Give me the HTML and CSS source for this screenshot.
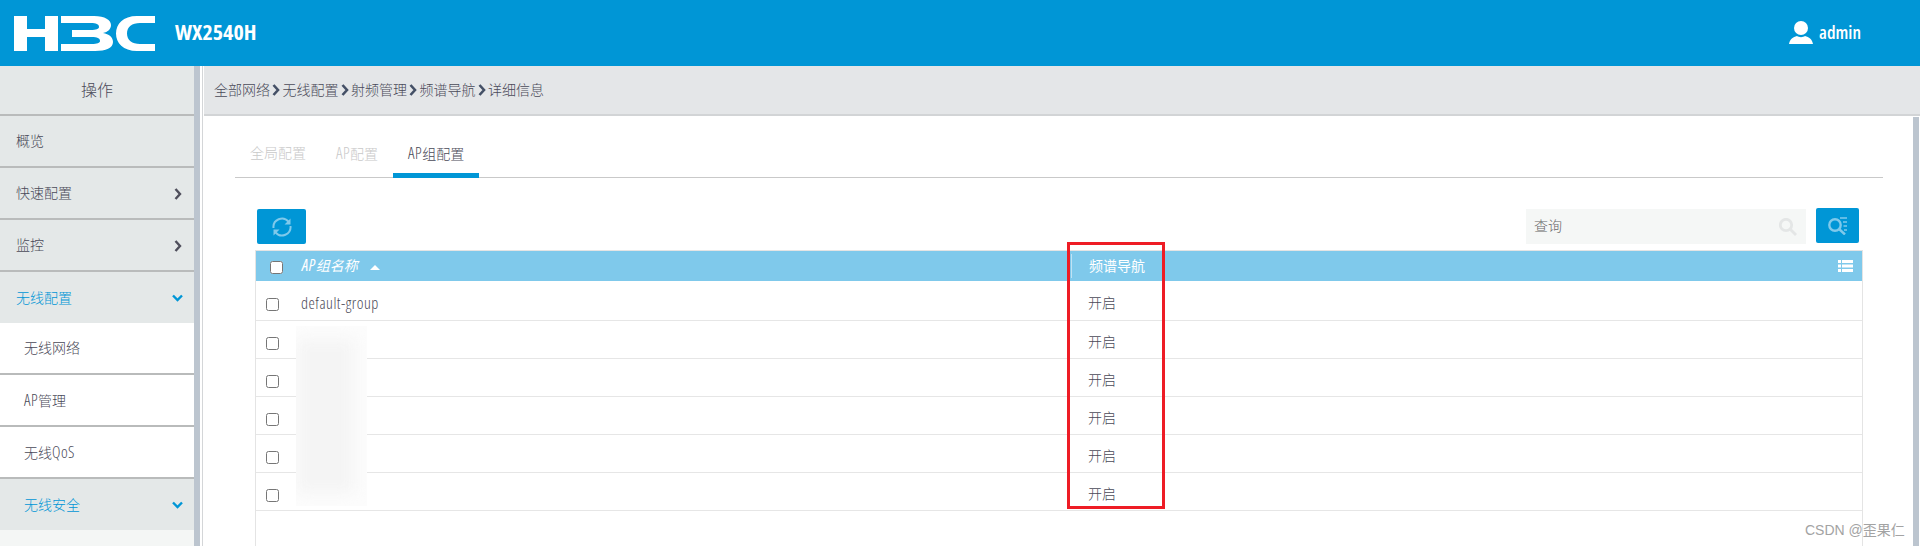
FILE: index.html
```html
<!DOCTYPE html>
<html lang="zh-CN">
<head>
<meta charset="utf-8">
<title>WX2540H</title>
<link rel="stylesheet" href="styles.css">
</head>
<body>
<div class="app">
  <header class="topbar">
    <svg class="logo" viewBox="0 0 142 35" aria-label="H3C"><path d="M0 0h13v13h18V0h13v35H31V21H13v14H0z"/><path d="M47 0h33c11 0 17 4 17 9 0 4-3 7-8 8 6 1 10 4 10 9 0 6-7 9-18 9H47v-7h31c5 0 8-1 8-3 0-3-3-4-8-4H58v-7h19c5 0 8-1 8-3 0-3-3-4-8-4H47z"/><path d="M141 0h-18c-14 0-21 8-21 17.500S109 35 123 35h18v-7h-15c-8 0-13-4-13-10.500S118 7 126 7h15z"/></svg>
    <div class="brand">WX2540H</div>
    <div class="user">
      <svg class="user-icon" viewBox="0 0 24 23"><circle cx="12" cy="7" r="7"/><path d="M0 23c1-5 4-7 8-8 2 1.500 6 1.500 8 0 4 1 7 3 8 8z"/></svg>
      <span>admin</span>
    </div>
  </header>
  <div class="body">
    <nav class="sidebar">
      <div class="side-title">操作</div>
      <div class="side-row">概览</div>
      <div class="side-row">快速配置<svg class="chev" viewBox="0 0 8 12"><path d="M1.500 1l4.500 5-4.500 5"/></svg></div>
      <div class="side-row">监控<svg class="chev" viewBox="0 0 8 12"><path d="M1.500 1l4.500 5-4.500 5"/></svg></div>
      <div class="side-row open">无线配置<svg class="chev-down" viewBox="0 0 11 8"><path d="M1 1.500l4.500 4.500 4.500-4.500"/></svg></div>
      <div class="side-sub">无线网络</div>
      <div class="side-sub"><span><span class="en">AP</span>管理</span></div>
      <div class="side-sub"><span>无线<span class="en">QoS</span></span></div>
      <div class="side-row open nested">无线安全<svg class="chev-down" viewBox="0 0 11 8"><path d="M1 1.500l4.500 4.500 4.500-4.500"/></svg></div>
    </nav>
    <div class="gutter"></div>
    <main class="main">
      <div class="crumbs">
        <span>全部网络</span><svg class="crumb-sep" viewBox="0 0 8 12"><path d="M1.500 1l4.500 5-4.500 5"/></svg>
        <span>无线配置</span><svg class="crumb-sep" viewBox="0 0 8 12"><path d="M1.500 1l4.500 5-4.500 5"/></svg>
        <span>射频管理</span><svg class="crumb-sep" viewBox="0 0 8 12"><path d="M1.500 1l4.500 5-4.500 5"/></svg>
        <span>频谱导航</span><svg class="crumb-sep" viewBox="0 0 8 12"><path d="M1.500 1l4.500 5-4.500 5"/></svg>
        <span>详细信息</span>
      </div>
      <section class="content">
        <div class="scrollbar"></div>
        <div class="tabs">
          <div class="tab">全局配置</div>
          <div class="tab"><span class="en">AP</span>配置</div>
          <div class="tab active"><span class="en">AP</span>组配置</div>
        </div>
        <div class="toolbar">
          <button class="icon-btn refresh" type="button" aria-label="刷新">
            <svg viewBox="0 0 22 22"><path d="M2.500 12a8.500 8.500 0 0 1 15-6.300M19.500 10a8.500 8.500 0 0 1-15 6.300"/><path class="solid" d="M19.500 2.500v6h-6zM2.500 19.500v-6h6z"/></svg>
          </button>
          <div class="search">
            <span>查询</span>
            <svg viewBox="0 0 18 18"><circle cx="7" cy="7" r="5.700"/><path d="M11 11l6 6"/></svg>
          </div>
          <button class="icon-btn adv" type="button" aria-label="高级查询">
            <svg viewBox="0 0 19 18"><circle cx="7" cy="8" r="5.700"/><path d="M11 12l6 5.500"/><path class="bars" d="M12 1h7M15 5h4M15.500 9h3.500M16 13h3"/></svg>
          </button>
        </div>
        <div class="table-wrap">
          <table class="grid">
            <colgroup><col class="c-check"><col class="c-name"><col></colgroup>
            <thead>
              <tr>
                <th class="head-check"><input type="checkbox"></th>
                <th class="head-name"><span class="en">AP</span>组名称<i class="sort"></i></th>
                <th class="head-nav">频谱导航
                  <svg class="cols" viewBox="0 0 15 12"><path d="M0 0h3v3H0zM0 4.500h3v3H0zM0 9h3v3H0zM4 0h11v3H4zM4 4.500h11v3H4zM4 9h11v3H4z"/></svg>
                </th>
              </tr>
            </thead>
            <tbody>
              <tr><td class="cell-check"><input type="checkbox"></td><td><span class="en">default-group</span></td><td class="cell-nav">开启</td></tr>
              <tr><td class="cell-check"><input type="checkbox"></td><td></td><td class="cell-nav">开启</td></tr>
              <tr><td class="cell-check"><input type="checkbox"></td><td></td><td class="cell-nav">开启</td></tr>
              <tr><td class="cell-check"><input type="checkbox"></td><td></td><td class="cell-nav">开启</td></tr>
              <tr><td class="cell-check"><input type="checkbox"></td><td></td><td class="cell-nav">开启</td></tr>
              <tr><td class="cell-check"><input type="checkbox"></td><td></td><td class="cell-nav">开启</td></tr>
            </tbody>
          </table>
          <div class="redact"></div>
          <div class="highlight"></div>
        </div>
      </section>
    </main>
  </div>
  <div class="watermark">CSDN @歪果仁</div>
</div>
</body>
</html>
```

FILE: styles.css
```css
* { box-sizing: border-box; }
html, body { margin: 0; height: 546px; overflow: hidden; background: #fff; }
body { font: 300 14px/1.2 "Open Sans", "Noto Sans CJK SC", sans-serif; font-stretch: 75%; color: #4a4a58; }
.en { font-size: 16px; line-height: 1; letter-spacing: .5px; }
.app { position: relative; height: 546px; display: flex; flex-direction: column; overflow: hidden; }

.topbar { flex: 0 0 66px; background: #0096d6; display: flex; align-items: center; color: #fff; }
.logo { width: 142px; height: 35px; margin-left: 14px; fill: #fff; }
.brand { margin-left: 19px; margin-bottom: 3px; font-size: 22px; font-weight: 700; }
.user { margin-left: auto; margin-right: 59px; display: flex; align-items: center; gap: 6px; font-size: 18px; font-weight: 600; }
.user-icon { width: 24px; height: 23px; fill: #fff; margin-bottom: 2px; }

.body { flex: 1; display: flex; min-height: 0; }
.sidebar { flex: 0 0 194px; background: #f4f6f5; }
.side-title { height: 50px; display: flex; align-items: center; justify-content: center; padding-top: 1px; font-size: 16px; background: #e4e8e8; border-bottom: 2px solid #b9bbbb; }
.side-row { height: 52px; display: flex; align-items: center; justify-content: space-between; padding: 1px 12px 0 16px; background: #e4e8e8; border-bottom: 2px solid #b9bbbb; }
.side-row.open { height: 51px; color: #0096d6; border-bottom: 0; }
.side-row.nested { padding-left: 24px; }
.side-sub { height: 52px; display: flex; align-items: center; padding: 1px 0 0 24px; background: #fff; border-bottom: 2px solid #b9bbbb; }
.chev { width: 8px; height: 12px; fill: none; stroke: #4f4f5c; stroke-width: 2.400; }
.chev-down { width: 11px; height: 8px; margin-right: -1px; fill: none; stroke: #0096d6; stroke-width: 2.400; }

.gutter { flex: 0 0 9px; background: #fff; border-left: 6px solid #bcc5cf; border-right: 1px solid #d4d6d8; }
.main { flex: 1; min-width: 0; display: flex; flex-direction: column; }
.crumbs { flex: 0 0 50px; margin-left: 1px; display: flex; align-items: center; padding-left: 10px; background: #e4e6e8; border-bottom: 2px solid #d2d4d6; }
.crumb-sep { width: 8px; height: 12px; margin: 0 2.500px 0 2px; fill: none; stroke: #445066; stroke-width: 2.600; }

.content { position: relative; flex: 1; padding: 0 37px 0 32px; min-height: 0; }
.scrollbar { position: absolute; top: 1px; right: 1px; bottom: 0; width: 6px; background: #bcc5cf; }
.tabs { height: 62px; display: flex; align-items: flex-end; border-bottom: 1px solid #c9c9c9; }
.tab { height: 40px; margin-bottom: -1px; padding: 7px 15px 0; color: #c9c9c9; border-bottom: 5px solid transparent; }
.tab.active { color: #4a4a58; border-bottom-color: #0096d6; }

.toolbar { display: flex; align-items: center; margin: 31px 24px 6px 22px; height: 35px; }
.icon-btn { width: 43px; height: 35px; padding: 0; border: 0; border-radius: 2px; background: #0096d6; display: flex; align-items: center; justify-content: center; }
.icon-btn svg { fill: none; stroke: #7fc9eb; stroke-width: 2.400; }
.refresh { width: 49px; }
.refresh svg { width: 22px; height: 22px; stroke-width: 2; }
.refresh .solid { fill: #7fc9eb; stroke: none; }
.adv { margin-left: 10px; margin-top: -2px; }
.adv svg { width: 19px; height: 18px; }
.adv .bars { stroke-width: 1.600; }
.search { margin-left: auto; width: 280px; height: 35px; background: #f5f7f6; display: flex; align-items: center; justify-content: space-between; padding: 0 9px 0 8px; color: #666; }
.search svg { width: 18px; height: 18px; fill: none; stroke: #e4e6e6; stroke-width: 2.800; }

.table-wrap { position: relative; margin: 0 20px; height: 296px; border: solid #e4e4e4; border-width: 1px 1px 0; }
.grid { width: 100%; table-layout: fixed; border-collapse: collapse; }
.c-check { width: 40px; }
.c-name { width: 775px; }
.grid input { display: block; width: 13px; height: 13px; margin: 0; }
.grid th { height: 30px; padding: 0; text-align: left; font-weight: 400; color: #fff; background: #7fc9eb; }
.head-check { padding-left: 14px !important; }
.head-check input { margin-top: 2px; }
.head-name { padding-left: 6px !important; font-style: italic; }
.sort { display: inline-block; margin: 0 0 1px 12px; border: solid transparent; border-width: 0 5px 5px; border-bottom-color: #fff; }
.head-nav { position: relative; padding-left: 18px !important; }
.head-nav::before { content: ""; position: absolute; left: 0; top: 3px; bottom: 3px; width: 1px; background: #bfe3f4; }
.cols { position: absolute; right: 9px; top: 9px; width: 15px; height: 12px; fill: #fff; }
.grid td { height: 38px; padding: 7px 0 0 5px; border-bottom: 1px solid #e6e6e6; }
.grid tbody tr:first-child td { height: 39px; }
.grid .cell-check { padding-left: 10px; padding-top: 9px; }
.grid .cell-nav { padding-left: 17px; }
.redact { position: absolute; left: 40px; top: 75px; width: 71px; height: 180px; background: #fcfcfc; overflow: hidden; }
.redact::before { content: ""; position: absolute; left: 2px; right: 14px; top: 14px; bottom: 14px; background: #f4f4f4; filter: blur(7px); }
.highlight { position: absolute; left: 811px; top: -9px; width: 98px; height: 267px; border: 3px solid #ee1c25; }

.watermark { position: absolute; left: 1805px; top: 522px; font: 14px/1.2 "Liberation Sans", "Noto Sans CJK SC", sans-serif; color: #a3a3a3; }
```
